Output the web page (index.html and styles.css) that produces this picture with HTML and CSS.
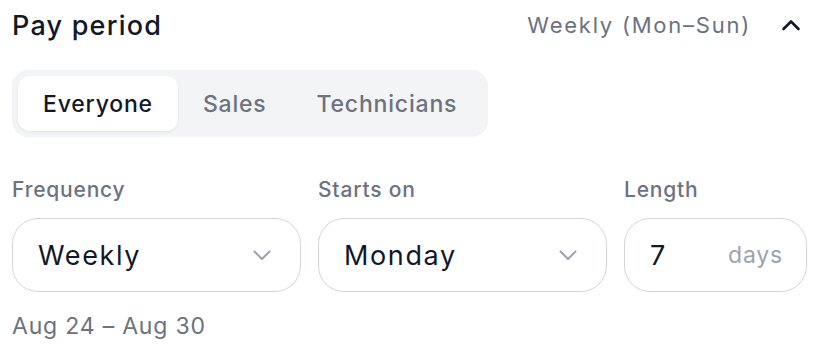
FILE: index.html
```html
<!DOCTYPE html>
<html lang="en">

<head>
    <meta charset="UTF-8" />
    <meta name="viewport" content="width=device-width, initial-scale=1.0" />
    <title>Pay period</title>
    <link rel="stylesheet" href="styles.css">
</head>

<body>
    <section class="pay-period">
        <header class="head">
            <h2>Pay period</h2>
            <div class="summary">
                <span>Weekly (Mon–Sun)</span>
                <svg class="chev-up" width="20" height="12" viewBox="0 0 20 12" fill="none">
                    <path d="M2.5 10 L10 2.5 L17.5 10" stroke="currentColor" stroke-width="2.6"
                        stroke-linecap="round" stroke-linejoin="round" />
                </svg>
            </div>
        </header>

        <div class="tabs">
            <div class="tab active">Everyone</div>
            <div class="tab">Sales</div>
            <div class="tab">Technicians</div>
        </div>

        <div class="fields">
            <div class="field">
                <label>Frequency</label>
                <div class="box select">
                    <span class="value">Weekly</span>
                    <svg class="chev-down" width="20" height="12" viewBox="0 0 20 12" fill="none">
                        <path d="M2.5 2.5 L10 10 L17.5 2.5" stroke="currentColor" stroke-width="2"
                            stroke-linecap="round" stroke-linejoin="round" />
                    </svg>
                </div>
            </div>
            <div class="field">
                <label>Starts on</label>
                <div class="box select">
                    <span class="value">Monday</span>
                    <svg class="chev-down" width="20" height="12" viewBox="0 0 20 12" fill="none">
                        <path d="M2.5 2.5 L10 10 L17.5 2.5" stroke="currentColor" stroke-width="2"
                            stroke-linecap="round" stroke-linejoin="round" />
                    </svg>
                </div>
            </div>
            <div class="field">
                <label>Length</label>
                <div class="box length">
                    <span class="value">7</span>
                    <span class="unit">days</span>
                </div>
            </div>
        </div>

        <p class="range">Aug 24 – Aug 30</p>
    </section>
</body>

</html>
```

FILE: styles.css
```css
:root {
    --text: #111827;
    --muted: #6b7280;
    --faint: #9ca3af;
    --line: #d1d5db;
    --track: #f3f4f6;
}

body {
    margin: 0;
    font-family: Inter, "Noto Sans", sans-serif;
    letter-spacing: 0.05em;
    color: var(--text);
    background: #ffffff;
}

.pay-period {
    padding: 0 13px 0 12px;
}

.head {
    display: flex;
    align-items: center;
    justify-content: space-between;
    height: 50px;
}

.head h2 {
    margin: 0;
    font-size: 27px;
    font-weight: 500;
    letter-spacing: 0.045em;
}

.summary {
    display: flex;
    align-items: center;
    gap: 30px;
    padding-right: 6px;
    font-size: 22px;
    letter-spacing: 0.08em;
    color: var(--muted);
}

.chev-up {
    color: var(--text);
}

.tabs {
    display: inline-flex;
    margin-top: 20px;
    padding: 6px;
    background: var(--track);
    border-radius: 16px;
}

.tab {
    height: 55px;
    padding: 0 25px;
    display: flex;
    align-items: center;
    font-size: 23px;
    font-weight: 500;
    letter-spacing: 0.035em;
    color: var(--muted);
    border-radius: 12px;
}

.tab.active {
    background: #ffffff;
    color: var(--text);
    box-shadow: 0 1px 3px rgba(17, 24, 39, 0.08);
}

.fields {
    display: grid;
    grid-template-columns: 289px 289px 1fr;
    column-gap: 17px;
    margin-top: 41px;
}

.field label {
    display: block;
    font-size: 21px;
    font-weight: 500;
    color: var(--muted);
    line-height: 24px;
}

.box {
    margin-top: 16px;
    height: 74px;
    box-sizing: border-box;
    border: 1.5px solid var(--line);
    border-radius: 26px;
    display: flex;
    align-items: center;
    justify-content: space-between;
    padding: 0 28px 0 25px;
}

.box .value {
    font-size: 27px;
    letter-spacing: 0.06em;
}

.chev-down {
    color: var(--faint);
}

.length {
    padding-right: 23px;
}

.unit {
    font-size: 23px;
    color: var(--faint);
}

.range {
    margin: 20px 0 0;
    font-size: 23px;
    color: var(--muted);
}
```
